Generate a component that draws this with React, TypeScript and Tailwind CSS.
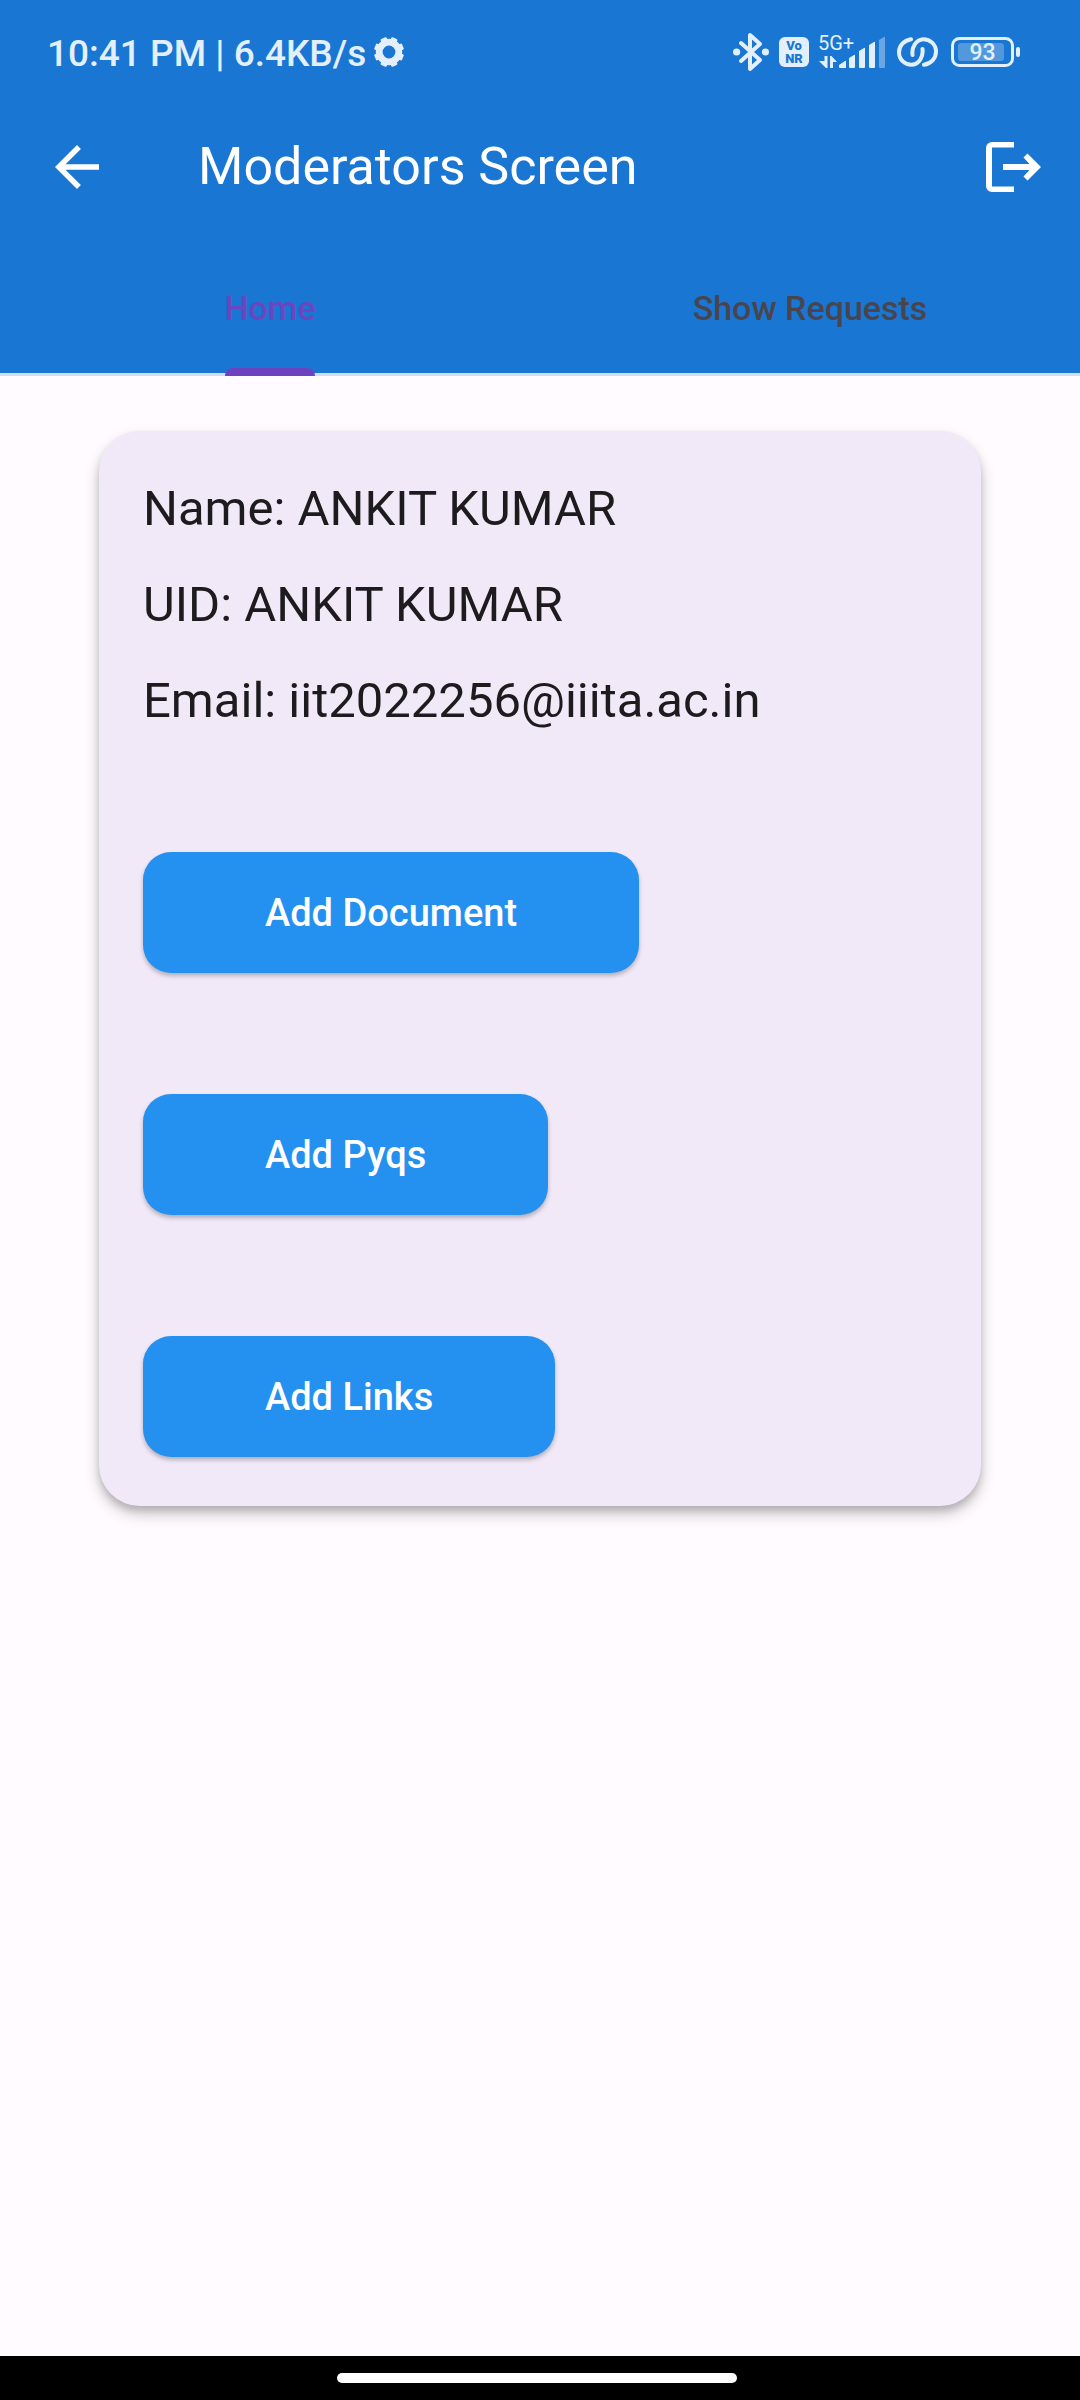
import React from "react";

const details = [
  "Name: ANKIT KUMAR",
  "UID: ANKIT KUMAR",
  "Email: iit2022256@iiita.ac.in",
];

const actions = ["Add Document", "Add Pyqs", "Add Links"];

function GearIcon() {
  const teeth = [0, 45, 90, 135, 180, 225, 270, 315];
  return (
    <svg viewBox="0 0 30 30" className="size-[30px]" aria-hidden="true">
      <circle cx="15" cy="15" r="9.8" fill="none" stroke="currentColor" strokeWidth="6.8" />
      {teeth.map((a) => (
        <rect key={a} x="11.7" y="0" width="6.6" height="6" rx="1.2" fill="currentColor" transform={`rotate(${a + 22.5} 15 15)`} />
      ))}
    </svg>
  );
}

function BluetoothIcon() {
  return (
    <svg viewBox="0 0 36 40" className="h-10 w-9" fill="none" stroke="currentColor" strokeWidth="4" strokeLinejoin="round" strokeLinecap="round" aria-hidden="true">
      <path d="M8 11 27 28 17 37V3L27 12 8 29" />
      <circle cx="3.6" cy="20" r="3.6" fill="currentColor" stroke="none" />
      <circle cx="32.4" cy="20" r="3.6" fill="currentColor" stroke="none" />
    </svg>
  );
}

function VoNrIcon() {
  return (
    <div className="flex size-[30px] flex-col items-center justify-center rounded-md bg-[#e3f0fc] text-[13px] leading-[13px] font-black text-[#1976d2]">
      <span>Vo</span>
      <span>NR</span>
    </div>
  );
}

function SignalIcon() {
  return (
    <svg viewBox="0 -6 68 44" className="h-11 w-[68px]" fill="currentColor" aria-hidden="true">
      <text x="-1" y="14" fontSize="20" fontFamily="Roboto, sans-serif">5G+</text>
      <path d="M5.500 20h3v12H7L0 25h5.500zM11 20h1.500L18 26h-4v6h-3z" />
      <path d="M20 29l6-4q1-.5 1 .5V32h-6q-1 0-1-1zM30 22l5-3q1-.5 1 .5V31q0 1-1 1h-4q-1 0-1-1zM40 15l5-3q1-.5 1 .5V31q0 1-1 1h-4q-1 0-1-1zM50 9l5-3q1-.5 1 .5V31q0 1-1 1h-4q-1 0-1-1z" />
      <path opacity=".4" d="M60 4l5-3q1-.5 1 .5V31q0 1-1 1h-4q-1 0-1-1z" />
    </svg>
  );
}

function LinkIcon() {
  const hook = "M14 2.200C7 3.500 2 8.500 2 15.500C2 22.500 8 28 15 27.800C22 27 26.500 20 25.500 12";
  return (
    <svg viewBox="0 0 44 30" className="h-[30px] w-11" fill="none" stroke="currentColor" strokeWidth="4" strokeLinecap="round" aria-hidden="true">
      <path d={hook} />
      <path d={hook} transform="rotate(180 20.5 15)" />
    </svg>
  );
}

function BatteryIcon() {
  return (
    <svg viewBox="0 0 70 30" className="h-[30px] w-[70px]" aria-hidden="true">
      <rect x="1.500" y="1.500" width="60" height="27" rx="7" fill="none" stroke="currentColor" strokeWidth="3" />
      <rect x="7" y="6" width="46" height="18" rx="3" fill="currentColor" opacity=".28" />
      <rect x="65" y="10" width="4" height="10" rx="2" fill="currentColor" />
      <text x="31.500" y="23" textAnchor="middle" fontSize="23" fontWeight="500" fontFamily="Roboto, sans-serif" fill="currentColor">93</text>
    </svg>
  );
}

function BackIcon() {
  return (
    <svg viewBox="0 0 44 44" className="size-11" fill="currentColor" aria-hidden="true">
      <path d="M44 19.250H10.530L25.900 3.880 22 0 0 22l22 22 3.880-3.880L10.530 24.750H44z" />
    </svg>
  );
}

function LogoutIcon() {
  return (
    <svg viewBox="0 0 56 50" className="h-[50px] w-14" fill="currentColor" aria-hidden="true">
      <path d="M28 0H6a6 6 0 0 0-6 6v38a6 6 0 0 0 6 6h22v-5.500H6v-39h22z" />
      <path d="M17 22h26.500L37.500 15.500 41.500 11.500 55 25 41.500 38.500 37.500 34.500 43.500 28H17z" />
    </svg>
  );
}

export default function App() {
  return (
    <div className="flex min-h-screen flex-col bg-[#fffbff] font-[Roboto,sans-serif]">
      <header className="bg-[#1976d2]">
        <div className="flex h-[104px] items-center justify-between pr-[59px] pl-[47px] text-[#e3f0fc]">
          <div className="flex items-center gap-2">
            <span className="pt-1 text-[37px] leading-11 font-medium">10:41 PM | 6.4KB/s</span>
            <GearIcon />
          </div>
          <div className="flex items-center gap-2.5">
            <BluetoothIcon />
            <VoNrIcon />
            <SignalIcon />
            <LinkIcon />
            <BatteryIcon />
          </div>
        </div>
        <div className="flex h-[126px] items-center pr-[38px] pl-[55px] text-white">
          <button type="button" aria-label="Back"><BackIcon /></button>
          <h1 className="ml-[99px] flex-1 text-[52px] leading-[60px]">Moderators Screen</h1>
          <button type="button" aria-label="Log out"><LogoutIcon /></button>
        </div>
        <nav role="tablist" className="grid h-[146px] grid-cols-2 border-b-3 border-[#d3dcf5] text-[34px] leading-10 font-medium">
          <button type="button" role="tab" aria-selected="true" className="relative flex justify-center pt-[58px] text-[#6a46c0]">
            <span>Home</span>
            <span className="absolute -bottom-[3px] h-2 w-[90px] rounded-t-lg bg-[#6c42c1]" />
          </button>
          <button type="button" role="tab" aria-selected="false" className="flex justify-center pt-[58px] text-[#49454f]">Show Requests</button>
        </nav>
      </header>

      <main className="flex-1 px-[99px] pt-[55px]">
        <section className="rounded-[41px] bg-[#f1e9f8] px-11 pt-[30px] pb-[49px] shadow-[0_8px_16px_rgba(0,0,0,0.2),0_5px_7px_rgba(0,0,0,0.15)]">
          <div className="text-[49px] leading-24 text-[#1d1b1e]">
            {details.map((line) => (
              <p key={line}>{line}</p>
            ))}
          </div>
          <div className="mt-[103px] flex flex-col items-start gap-[121px]">
            {actions.map((label) => (
              <button key={label} type="button" className="h-[121px] rounded-[28px] bg-[#2490f0] px-[122px] text-[38px] leading-11 font-medium text-white shadow-[0_3px_4px_rgba(0,0,0,0.25)]">
                {label}
              </button>
            ))}
          </div>
        </section>
      </main>

      <footer className="flex h-11 items-center justify-center bg-black pr-1.5">
        <div className="h-2.5 w-[400px] rounded-full bg-white" />
      </footer>
    </div>
  );
}
